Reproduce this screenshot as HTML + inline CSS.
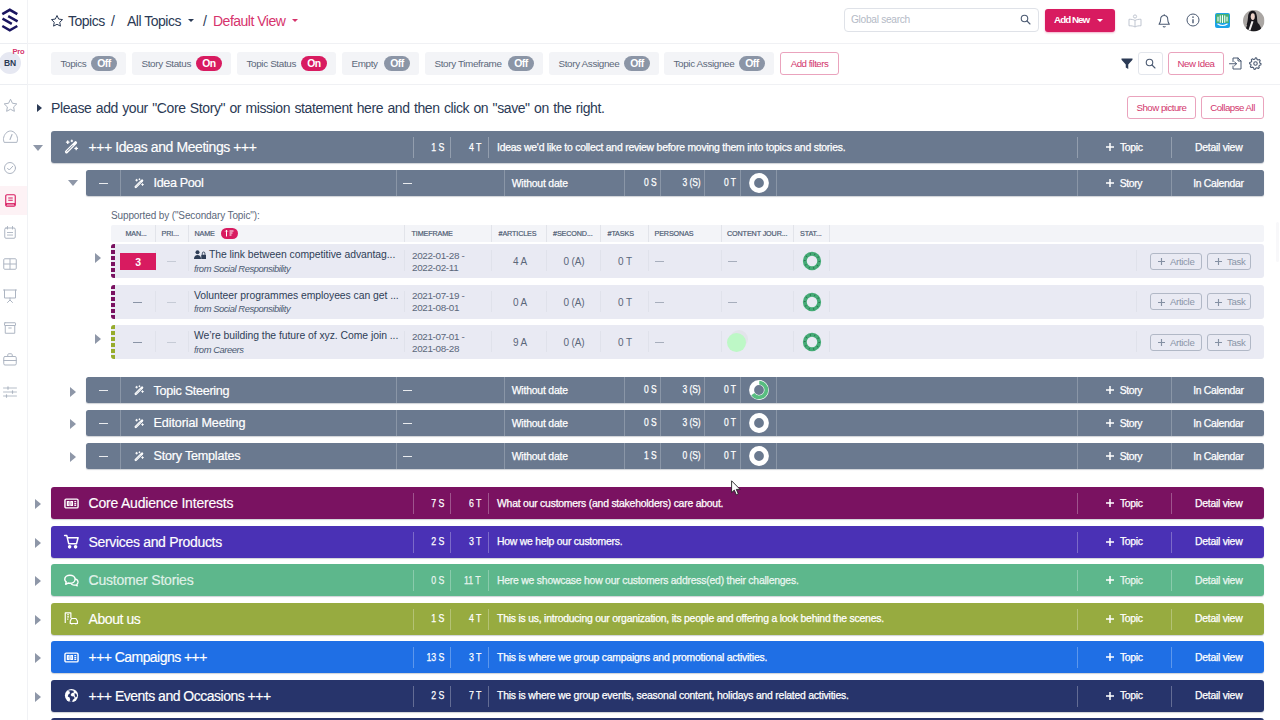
<!DOCTYPE html>
<html>
<head>
<meta charset="utf-8">
<title>Topics</title>
<style>
*{box-sizing:border-box;margin:0;padding:0}
html,body{width:1280px;height:720px;overflow:hidden;background:#fff}
body{font-family:"Liberation Sans",sans-serif;position:relative;color:#2b3a55}
.abs{position:absolute}
.t{position:absolute;white-space:nowrap;line-height:1}
svg{position:absolute;overflow:visible}
/* sidebar */
#side{position:absolute;left:0;top:0;width:28px;height:720px;background:#fff;border-right:1px solid #f1f2f5}
#side .act{position:absolute;left:0;top:186px;width:27px;height:28.500px;background:#fdf2f5}
/* header */
#hdr{position:absolute;left:28px;top:0;width:1252px;height:44px;border-bottom:1px solid #f0f1f4}
#flt{position:absolute;left:28px;top:44px;width:1252px;height:41px;border-bottom:1px solid #f0f1f4}
.chip{position:absolute;top:52px;height:23px;background:#f3f4f7;border-radius:3px}
.chip .l{position:absolute;left:9.500px;top:6px;font-size:9.900px;letter-spacing:-.36px;color:#5b677a;white-space:nowrap;line-height:11px}
.chip .b{position:absolute;right:9px;top:4px;width:26px;height:15px;border-radius:8px;background:#8b95a6;color:#fff;font-size:10.4px;font-weight:700;letter-spacing:-.55px;text-align:center;line-height:15px}
.chip .b.on{background:#d81b60}
.obtn{position:absolute;border:1px solid #eaa3bd;border-radius:3px;color:#d2366d;background:#fff;font-size:9.700px;letter-spacing:-.500px;text-align:center;white-space:nowrap}
/* rows */
.row{position:absolute;border-radius:3px;color:#fff;box-shadow:0 1px 1px rgba(60,70,90,.25)}
.r1{left:51px;width:1213px;height:32px}
.r2{left:85.700px;width:1178.500px;height:26.400px;background:#6a798f;border-radius:2.500px}
.sep{position:absolute;width:1px;background:rgba(255,255,255,.28)}
.r1 .sep{top:6px;height:21px}
.r2 .sep{top:0;height:26px;background:rgba(255,255,255,.22)}
.r1 .ttl{position:absolute;left:37.500px;top:8px;font-size:14px;letter-spacing:-.42px;-webkit-text-stroke:.15px #fff;line-height:16px;white-space:nowrap}
.r1 .n{position:absolute;top:10.500px;font-size:11px;letter-spacing:-.1px;-webkit-text-stroke:.25px #fff;transform:scaleX(.8);transform-origin:right center;line-height:11px;text-align:right;white-space:nowrap}
.r1 .d{position:absolute;left:446px;top:10.700px;font-size:10.400px;letter-spacing:-.215px;-webkit-text-stroke:.25px #fff;line-height:12px;white-space:nowrap}
.r1 .a1{position:absolute;left:1054px;top:10.700px;font-size:10.400px;letter-spacing:-.35px;-webkit-text-stroke:.25px #fff;line-height:12px;white-space:nowrap}
.r1 .a2{position:absolute;left:1144px;top:10.700px;font-size:10.400px;letter-spacing:-.26px;-webkit-text-stroke:.25px #fff;line-height:12px;white-space:nowrap}
.r2 .ttl{position:absolute;left:67.900px;top:6px;font-size:12.600px;letter-spacing:-.38px;-webkit-text-stroke:.2px #fff;line-height:15px;white-space:nowrap}
.r2 .x{position:absolute;top:7.500px;font-size:10.400px;letter-spacing:-.36px;-webkit-text-stroke:.25px #fff;line-height:12px;white-space:nowrap}
.r2 .n{position:absolute;top:6.500px;font-size:10.600px;letter-spacing:-.1px;-webkit-text-stroke:.25px #fff;transform:scaleX(.8);transform-origin:right center;line-height:11px;text-align:right;white-space:nowrap}
.dash{position:absolute;height:1px;background:rgba(255,255,255,.85)}
.car{position:absolute;width:0;height:0;border-style:solid}
.car.r{border-width:5px 0 5px 6px;border-color:transparent transparent transparent #8e97a8}
.car.d{border-width:6px 5px 0 5px;border-color:#8e97a8 transparent transparent transparent}
/* table */
#th{position:absolute;left:111px;top:225px;width:1153px;height:16.600px;background:#f3f4f8;border-radius:2px}
#th span{position:absolute;top:5px;font-size:7.200px;letter-spacing:-.12px;color:#4f5d74;-webkit-text-stroke:.2px #4f5d74;line-height:8px;white-space:nowrap}
#th i{position:absolute;top:0;width:1px;height:16.600px;background:#e2e4ea}
.sr{position:absolute;left:111px;width:1153px;height:34px;background:#e9eaf3;border-radius:3px}
.sr i.s{position:absolute;top:6px;width:1px;height:21px;background:#e0e2eb}
.sr .lb{position:absolute;left:0;top:0;width:4.300px;height:34px;border-radius:3px 0 0 3px}
.sr .tt{position:absolute;left:83px;top:5px;font-size:10.400px;letter-spacing:-.05px;color:#2f3e57;line-height:12px;white-space:nowrap}
.sr .fr{position:absolute;left:83px;top:18.700px;font-size:9.400px;font-style:italic;letter-spacing:-.43px;color:#4b5a72;line-height:11px;white-space:nowrap}
.sr .dt{position:absolute;left:301px;top:5.500px;font-size:9.900px;letter-spacing:-.34px;color:#5b677a;line-height:12px;white-space:nowrap}
.sr .c{position:absolute;top:12px;font-size:10px;letter-spacing:-.1px;color:#5b677a;line-height:12px;text-align:center;white-space:nowrap}
.sr .md{position:absolute;top:17px;height:1px;width:9px;background:#8a94a6}
.sr .ld{position:absolute;top:17px;height:1px;width:9px;background:#a7aebc}
.sr .bt{position:absolute;top:8.500px;height:17px;border:1px solid #b1b8c6;border-radius:3px;color:#8a95a7;font-size:9.600px;letter-spacing:-.32px;line-height:16px;white-space:nowrap}
</style>
</head>
<body>
<div id="side"><div class="act"></div>
<svg style="left:0;top:0" width="28" height="40" viewBox="0 0 28 40" fill="none" stroke="#1a1560" stroke-width="2.500" stroke-linejoin="miter"><path d="M2.300 14.200L9.800 9.800l7.500 4.400M2.500 18.700l9.300 5.200M8.200 16.100l9.400 5.200M2.300 26l7.500 4.400 7.500-4.400"/></svg>
<div class="abs" style="left:0;top:43px;width:27px;height:1px;background:#eceef2"></div>
<div class="abs" style="left:-1px;top:52px;width:22px;height:22px;border-radius:50%;background:#e6e8f2"></div>
<span class="t" style="left:4px;top:59px;font-size:8.500px;font-weight:700;letter-spacing:-.2px;color:#2b3a55">BN</span>
<span class="t" style="left:12.500px;top:48px;font-size:7.500px;font-weight:700;letter-spacing:-.2px;color:#d6336c">Pro</span>
<div class="abs" style="left:0;top:84px;width:27px;height:1px;background:#eceef2"></div>
<svg style="left:2.500px;top:97.500px" width="15" height="15" viewBox="0 0 24 24" fill="none" stroke="#adb5c2" stroke-width="1.600" stroke-linejoin="round"><path d="M12 2l3.100 6.400 7 1-5.100 4.900 1.200 7L12 18l-6.200 3.300 1.200-7L1.900 9.400l7-1z"/></svg>
<svg style="left:2.500px;top:130px" width="15" height="13" viewBox="0 0 30 26" fill="none" stroke="#adb5c2" stroke-width="2" stroke-linejoin="round" stroke-linecap="round"><path d="M2 24c-1-3-1.200-5-1-7C2 9 8 2 15 2s13 7 14 15c.2 2 0 4-1 7z"/><path d="M14 19l4-10" stroke-width="2.200"/></svg>
<svg style="left:4px;top:162px" width="12" height="12" viewBox="0 0 24 24" fill="none" stroke="#adb5c2" stroke-width="2" stroke-linecap="round" stroke-linejoin="round"><circle cx="12" cy="12" r="11"/><path d="M7 12.500l3.500 3.500L17.500 8.500"/></svg>
<svg style="left:4.500px;top:193.700px" width="11" height="13" viewBox="0 0 22 26" fill="none" stroke="#d81b60" stroke-width="2.200" stroke-linejoin="round"><rect x="1.500" y="1.500" width="19" height="23" rx="2.500"/><path d="M6.500 8h9M6.500 12.500h9" stroke-width="2.200"/><path d="M1.500 20.500h19" stroke-width="4.500"/><path d="M4 21.200h14" stroke="#fff" stroke-width="1"/></svg>
<svg style="left:4px;top:226px" width="12" height="13" viewBox="0 0 24 26" fill="none" stroke="#adb5c2" stroke-width="2" stroke-linejoin="round" stroke-linecap="round"><rect x="1.500" y="4" width="21" height="20.500" rx="2.500"/><path d="M7 1v5M17 1v5"/><path d="M7 13h2M11 13h2M15 13h2M7 18h2M11 18h2M15 18h2" stroke-width="2.200"/></svg>
<svg style="left:3px;top:258px" width="14" height="12" viewBox="0 0 28 24" fill="none" stroke="#adb5c2" stroke-width="2" stroke-linejoin="round"><rect x="1.500" y="1.500" width="25" height="21" rx="2"/><path d="M14 1.500v21M1.500 12h25"/></svg>
<svg style="left:3px;top:289px" width="14" height="14" viewBox="0 0 28 28" fill="none" stroke="#adb5c2" stroke-width="2" stroke-linejoin="round" stroke-linecap="round"><path d="M1 2h26M3 2v16h22V2M14 18v4M9 27l5-5 5 5"/></svg>
<svg style="left:4px;top:322px" width="12" height="12" viewBox="0 0 24 24" fill="none" stroke="#adb5c2" stroke-width="2" stroke-linejoin="round" stroke-linecap="round"><rect x="1" y="1.500" width="22" height="5.500" rx="1"/><path d="M2.500 7v15.500h19V7M9.500 12h5"/></svg>
<svg style="left:3px;top:353px" width="14" height="13" viewBox="0 0 28 26" fill="none" stroke="#adb5c2" stroke-width="2" stroke-linejoin="round" stroke-linecap="round"><rect x="1.500" y="7" width="25" height="17" rx="2.500"/><path d="M9.500 7V3.500c0-1 .8-2 2-2h5c1.200 0 2 1 2 2V7M1.500 15h25M11.500 15h5" /></svg>
<svg style="left:3px;top:386px" width="14" height="12" viewBox="0 0 28 24" fill="none" stroke="#adb5c2" stroke-width="1.800" stroke-linecap="round"><path d="M1 4h26M1 12h26M1 20h26"/><path d="M10 1.500v5M19 9.500v5M7 17.500v5" stroke-width="2.400"/></svg>
</div>
<div id="hdr"></div>
<div id="flt"></div>
<!-- header -->
<svg style="left:49.700px;top:13.500px" width="14" height="14" viewBox="0 0 24 24" fill="none" stroke="#2b3a55" stroke-width="1.700" stroke-linejoin="round"><path d="M12 2.6l2.9 6.1 6.6.9-4.8 4.6 1.2 6.6L12 17.6l-5.9 3.2 1.2-6.6L2.5 9.6l6.6-.9z"/></svg>
<span class="t" style="left:68px;top:13.800px;font-size:14px;letter-spacing:-.5px;color:#2b3a55">Topics</span>
<span class="t" style="left:111px;top:13.800px;font-size:14px;color:#2b3a55">/</span>
<span class="t" style="left:127px;top:13.800px;font-size:14px;letter-spacing:-.5px;color:#2b3a55">All Topics</span>
<div class="car" style="left:187.500px;top:19px;border-style:solid;border-width:3.500px 3px 0 3px;border-color:#2b3a55 transparent transparent transparent"></div>
<span class="t" style="left:203px;top:13.800px;font-size:14px;color:#2b3a55">/</span>
<span class="t" style="left:213px;top:13.800px;font-size:14px;letter-spacing:-.5px;color:#d6336c">Default View</span>
<div class="car" style="left:292px;top:19px;border-style:solid;border-width:3.5px 3px 0 3px;border-color:#d6336c transparent transparent transparent"></div>
<div class="abs" style="left:844px;top:8px;width:195px;height:24px;border:1px solid #dfe2e8;border-radius:4px"></div>
<span class="t" style="left:851px;top:15px;font-size:10.2px;letter-spacing:-.3px;color:#b4bac6">Global search</span>
<svg style="left:1020px;top:14px" width="11" height="11" viewBox="0 0 22 22" fill="none" stroke="#4b5a72" stroke-width="2.2" stroke-linecap="round"><circle cx="9" cy="9" r="6.5"/><path d="M14 14l6 6"/></svg>
<div class="abs" style="left:1045px;top:9px;width:70px;height:23px;background:#d81b60;border-radius:3px;box-shadow:0 1px 2px rgba(216,27,96,.35)"></div>
<span class="t" style="left:1054px;top:15px;font-size:9.800px;font-weight:700;letter-spacing:-.950px;color:#fff">Add New</span>
<div class="car" style="left:1097px;top:19px;border-style:solid;border-width:3.5px 3px 0 3px;border-color:#fff transparent transparent transparent"></div>
<!-- reader icon -->
<svg style="left:1128.300px;top:13.600px" width="14" height="14" viewBox="0 0 28 28" fill="none" stroke="#bfc5d0" stroke-width="2" stroke-linejoin="round"><circle cx="14" cy="5" r="3.2"/><path d="M14 13c-3-2-7-2.5-12-2.5v13c5 0 9 .5 12 2.5 3-2 7-2.500 12-2.500v-13c-5 0-9 .5-12 2.500zM14 13v13"/></svg>
<!-- bell -->
<svg style="left:1158px;top:13.600px" width="12.400" height="14.400" viewBox="0 0 24 28" fill="none" stroke="#4b5a72" stroke-width="2" stroke-linejoin="round" stroke-linecap="round"><path d="M12 3c-4.500 0-7 3.500-7 8 0 5-2 7-3 9h20c-1-2-3-4-3-9 0-4.500-2.500-8-7-8zM10 24.500c.6 1 3.400 1 4 0M12 1v2"/></svg>
<!-- info -->
<svg style="left:1186.200px;top:13.400px" width="14" height="14" viewBox="0 0 28 28" fill="none" stroke="#4b5a72" stroke-width="2"><circle cx="14" cy="14" r="12"/><path d="M14 12.500v8" stroke-width="2.800"/><circle cx="14" cy="8.300" r="1.600" fill="#4b5a72" stroke="none"/></svg>
<!-- intercom -->
<div class="abs" style="left:1215px;top:13px;width:15px;height:15px;background:#1ba3e8;border-radius:2px"></div>
<div class="abs" style="left:1216px;top:14px;width:13px;height:8.500px;background:#45b076"></div>
<svg style="left:1215px;top:13px" width="15" height="15" viewBox="0 0 30 30" fill="none" stroke="#fff" stroke-width="2.200" stroke-linecap="round"><path d="M6 8v8M10.500 5.500v13M15 5v14M19.500 5.500v13M24 8v8M5.500 22c6 3.800 13 3.800 19 0"/></svg>
<!-- avatar -->
<svg style="left:1242.500px;top:10.100px" width="21.500" height="21.500" viewBox="0 0 44 44"><defs><clipPath id="av"><circle cx="22" cy="22" r="22"/></clipPath></defs><g clip-path="url(#av)"><rect width="44" height="44" fill="#aaa6a3"/><path d="M20 1.500c-6 0-9 5-9.500 11-.5 6-1 12-3 18h23.500c-2-5-2-11-2.500-17-.5-6-3-12-8.500-12z" fill="#17151a"/><path d="M5 44c1-9 4-17 10.500-20l9-1c7 2 12 9 14 21z" fill="#1b1a1e"/><ellipse cx="20" cy="13.500" rx="4.200" ry="7" fill="#ecd2c8"/><path d="M17.500 22.500l4 1-6.500 19-4-1z" fill="#f3f1f0"/></g></svg>
<!-- filter chips -->
<div class="chip" style="left:51px;width:75px"><span class="l">Topics</span><span class="b">Off</span></div>
<div class="chip" style="left:132px;width:99px"><span class="l">Story Status</span><span class="b on">On</span></div>
<div class="chip" style="left:237px;width:99px"><span class="l">Topic Status</span><span class="b on">On</span></div>
<div class="chip" style="left:342px;width:77px"><span class="l">Empty</span><span class="b">Off</span></div>
<div class="chip" style="left:425px;width:118px"><span class="l">Story Timeframe</span><span class="b">Off</span></div>
<div class="chip" style="left:549px;width:110px"><span class="l">Story Assignee</span><span class="b">Off</span></div>
<div class="chip" style="left:664px;width:110px"><span class="l">Topic Assignee</span><span class="b">Off</span></div>
<div class="obtn" style="left:780px;top:52px;width:59px;height:23px;line-height:21px">Add filters</div>
<svg style="left:1121px;top:58px" width="12" height="12" viewBox="0 0 24 24" fill="#2b3a55"><path d="M1 1h22v2.500l-8.500 9.500v9l-5-3v-6L1 3.500z"/></svg>
<div class="abs" style="left:1138px;top:52px;width:25px;height:23px;border:1px solid #e3e6ec;border-radius:3px"></div>
<svg style="left:1145px;top:58px" width="11" height="11" viewBox="0 0 22 22" fill="none" stroke="#4b5a72" stroke-width="2.200" stroke-linecap="round"><circle cx="9" cy="9" r="6.500"/><path d="M14 14l6 6"/></svg>
<div class="obtn" style="left:1168px;top:52px;width:56px;height:23px;line-height:21px">New Idea</div>
<!-- import icon -->
<svg style="left:1229px;top:57px" width="13" height="13" viewBox="0 0 26 26" fill="none" stroke="#4b5a72" stroke-width="2" stroke-linejoin="round" stroke-linecap="round"><path d="M8 9V2h10l6 6v16H8v-6M18 2v6h6M1 13.500h14M11 9.500l4 4-4 4"/></svg>
<!-- gear -->
<svg style="left:1249px;top:57px" width="13" height="13" viewBox="0 0 24 24" fill="none" stroke="#4b5a72" stroke-width="2" stroke-linejoin="round"><circle cx="12" cy="12" r="3.200"/><path d="M12 1.500l2.200.4.700 2.700 1.700 1 2.700-.8 1.500 1.800-1.300 2.500.5 1.900 2.300 1.400-.4 2.300-2.700.7-1 1.700.8 2.600-1.800 1.500-2.500-1.300-1.900.5-1.400 2.400-2.300-.4-.700-2.700-1.700-1-2.700.8-1.500-1.800 1.300-2.500-.5-1.900L1 12.300l.4-2.300 2.700-.7 1-1.700-.8-2.700L6.100 3.400l2.500 1.300 1.900-.5z"/></svg>
<!-- core story -->
<div class="car" style="left:36.500px;top:103.500px;border-style:solid;border-width:4px 0 4px 5px;border-color:transparent transparent transparent #2b3a55"></div>
<span class="t" style="left:51px;top:100.700px;font-size:14px;letter-spacing:-.4px;word-spacing:.85px;color:#2b3a55">Please add your "Core Story" or mission statement here and then click on "save" on the right.</span>
<div class="obtn" style="left:1127px;top:96px;width:69px;height:23px;line-height:21px">Show picture</div>
<div class="obtn" style="left:1201px;top:96px;width:63px;height:23px;line-height:21px">Collapse All</div>

<div class="row r1" style="top:131px;background:#6a798f"><svg style="left:12.500px;top:7.500px" width="15" height="15" viewBox="0 0 24 24" fill="none" stroke="#fff" stroke-linecap="round"><path d="M4 20.500L18.500 6" stroke-width="5"/><path d="M5 19.500L14 10.500" stroke="#6a798f" stroke-width="1.500"/><path d="M6 3v4M4 5h4M19.500 13v4M17.500 15h4M12.500 2v2M11.500 3h2" stroke-width="2.200"/></svg><span class="ttl">+++ Ideas and Meetings +++</span><i class="sep" style="left:362px"></i><span class="n" style="right:820px">1 S</span><i class="sep" style="left:399px"></i><span class="n" style="right:783px">4 T</span><i class="sep" style="left:437px"></i><span class="d">Ideas we'd like to collect and review before moving them into topics and stories.</span><i class="sep" style="left:1026px"></i><svg style="left:1055px;top:12px" width="8" height="8" viewBox="0 0 8 8" stroke="#fff" stroke-width="1.500"><path d="M4 0v8M0 4h8"/></svg><span class="a1" style="left:1069px">Topic</span><i class="sep" style="left:1120px"></i><span class="a2">Detail view</span></div>
<div class="car d" style="left:33px;top:145px"></div>
<div class="row r2" style="top:170px"><i class="dash" style="left:13px;top:13px;width:9px"></i><i class="sep" style="left:34px"></i><svg style="left:48px;top:7.500px" width="10.500" height="10.500" viewBox="0 0 24 24" fill="none" stroke="#fff" stroke-linecap="round"><path d="M4 20.500L18.500 6" stroke-width="5.500"/><path d="M5 19.500L15 9.500" stroke="#6a798f" stroke-width="1.100" opacity=".7"/><path d="M6 3v4M4 5h4M19.500 13v4M17.500 15h4M12.500 2v2M11.500 3h2" stroke-width="2.200"/></svg><span class="ttl">Idea Pool</span><i class="sep" style="left:310px"></i><i class="dash" style="left:317px;top:13px;width:9px"></i><i class="sep" style="left:418px"></i><span class="x" style="left:426px;letter-spacing:-.18px">Without date</span><i class="sep" style="left:538px"></i><span class="n" style="right:608px">0 S</span><i class="sep" style="left:574px"></i><span class="n" style="right:564px">3 (S)</span><i class="sep" style="left:618px"></i><span class="n" style="right:528px">0 T</span><i class="sep" style="left:654px"></i><svg style="left:663.700px;top:3.200px" width="20" height="20" viewBox="0 0 20 20"><circle cx="10" cy="10" r="7.400" fill="none" stroke="#fff" stroke-width="5"/></svg><i class="sep" style="left:690px"></i><i class="sep" style="left:991px"></i><svg style="left:1020px;top:9px" width="8" height="8" viewBox="0 0 8 8" stroke="#fff" stroke-width="1.500"><path d="M4 0v8M0 4h8"/></svg><span class="x" style="left:1034px">Story</span><i class="sep" style="left:1085px"></i><span class="x" style="left:1107.500px;letter-spacing:-.29px">In Calendar</span></div>
<div class="car d" style="left:68px;top:180px"></div>
<span class="t" style="left:111px;top:210.500px;font-size:10px;letter-spacing:-.12px;color:#5b677a">Supported by ("Secondary Topic"):</span>
<div id="th"><i style="left:43.5px"></i><i style="left:76.5px"></i><i style="left:293px"></i><i style="left:380px"></i><i style="left:435px"></i><i style="left:489px"></i><i style="left:536.5px"></i><i style="left:609.5px"></i><i style="left:681.5px"></i><i style="left:717.5px"></i><span style="left:14.5px">MAN...</span><span style="left:50.5px">PRI...</span><span style="left:83.5px">NAME</span><span style="left:300.5px">TIMEFRAME</span><span style="left:387.5px">#ARTICLES</span><span style="left:442px">#SECOND...</span><span style="left:496.5px">#TASKS</span><span style="left:543.5px">PERSONAS</span><span style="left:616px">CONTENT JOUR...</span><span style="left:689px">STAT...</span><div class="abs" style="left:110px;top:3px;width:17px;height:11px;border-radius:6px;background:#d81b60"></div><svg style="left:114px;top:5px" width="9" height="7" viewBox="0 0 18 14" fill="none" stroke="#fff" stroke-width="2"><path d="M3 0v13M0.500 3L3 0.500 5.500 3M9 2h8M9 6h6M9 10h4"/></svg></div>
<div class="sr" style="top:244px"><div class="lb" style="background:repeating-linear-gradient(180deg,#7a1261 0 4px,transparent 4px 6px)"></div><i class="s" style="left:43.5px"></i><i class="s" style="left:76.5px"></i><i class="s" style="left:293px"></i><i class="s" style="left:380px"></i><i class="s" style="left:435px"></i><i class="s" style="left:489px"></i><i class="s" style="left:536.5px"></i><i class="s" style="left:609.5px"></i><i class="s" style="left:681.5px"></i><i class="s" style="left:717.5px"></i><i class="s" style="left:1024.5px"></i><div class="abs" style="left:9px;top:8.500px;width:36px;height:17px;background:#d81b60"></div><span class="c" style="left:9px;width:36px;top:11.500px;color:#fff;font-weight:700;font-size:10.5px">3</span><i class="ld" style="left:56px;background:#c6cbd6"></i><svg style="left:83px;top:6px" width="12" height="9" viewBox="0 0 24 18" fill="#2f3e57"><circle cx="7" cy="4.500" r="4"/><path d="M0 18c0-5 3-8 7-8s7 3 7 8z"/><path d="M14.500 9.500h9.500v8.500h-9.500z"/><path d="M16.700 9.500V6.500a2.500 2.500 0 015 0v3" fill="none" stroke="#2f3e57" stroke-width="1.800"/></svg><span class="tt" style="left:98px">The link between competitive advantag...</span><span class="fr">from Social Responsibility</span><span class="dt">2022-01-28 -<br>2022-02-11</span><span class="c" style="left:389px;width:40px">4 A</span><span class="c" style="left:443px;width:40px">0 (A)</span><span class="c" style="left:494px;width:40px">0 T</span><i class="ld" style="left:544px"></i><i class="ld" style="left:617px"></i><svg style="left:691px;top:7px" width="20" height="20" viewBox="0 0 20 20"><circle cx="10" cy="10" r="7.200" fill="none" stroke="#45ab76" stroke-width="3.900"/><circle cx="10" cy="10" r="7.200" fill="none" stroke="#1f4e3c" stroke-width="1.600" stroke-dasharray="1 3.500" opacity=".6"/></svg><div class="bt" style="left:1039px;width:52px"><svg style="left:7px;top:4.500px" width="7" height="7" viewBox="0 0 8 8" stroke="#8490a3" stroke-width="1.300"><path d="M4 0v8M0 4h8"/></svg><span style="position:absolute;left:19px">Article</span></div><div class="bt" style="left:1096px;width:44px"><svg style="left:7px;top:4.500px" width="7" height="7" viewBox="0 0 8 8" stroke="#8490a3" stroke-width="1.300"><path d="M4 0v8M0 4h8"/></svg><span style="position:absolute;left:19px">Task</span></div></div>
<div class="car r" style="left:95px;top:252.7px"></div>
<div class="sr" style="top:284.5px"><div class="lb" style="background:repeating-linear-gradient(180deg,#7a1261 0 4px,transparent 4px 6px)"></div><i class="s" style="left:43.5px"></i><i class="s" style="left:76.5px"></i><i class="s" style="left:293px"></i><i class="s" style="left:380px"></i><i class="s" style="left:435px"></i><i class="s" style="left:489px"></i><i class="s" style="left:536.5px"></i><i class="s" style="left:609.5px"></i><i class="s" style="left:681.5px"></i><i class="s" style="left:717.5px"></i><i class="s" style="left:1024.5px"></i><i class="md" style="left:22px"></i><i class="ld" style="left:56px;background:#c6cbd6"></i><span class="tt">Volunteer programmes employees can get ...</span><span class="fr">from Social Responsibility</span><span class="dt">2021-07-19 -<br>2021-08-01</span><span class="c" style="left:389px;width:40px">0 A</span><span class="c" style="left:443px;width:40px">0 (A)</span><span class="c" style="left:494px;width:40px">0 T</span><i class="ld" style="left:544px"></i><i class="ld" style="left:617px"></i><svg style="left:691px;top:7px" width="20" height="20" viewBox="0 0 20 20"><circle cx="10" cy="10" r="7.200" fill="none" stroke="#45ab76" stroke-width="3.900"/><circle cx="10" cy="10" r="7.200" fill="none" stroke="#1f4e3c" stroke-width="1.600" stroke-dasharray="1 3.500" opacity=".6"/></svg><div class="bt" style="left:1039px;width:52px"><svg style="left:7px;top:4.500px" width="7" height="7" viewBox="0 0 8 8" stroke="#8490a3" stroke-width="1.300"><path d="M4 0v8M0 4h8"/></svg><span style="position:absolute;left:19px">Article</span></div><div class="bt" style="left:1096px;width:44px"><svg style="left:7px;top:4.500px" width="7" height="7" viewBox="0 0 8 8" stroke="#8490a3" stroke-width="1.300"><path d="M4 0v8M0 4h8"/></svg><span style="position:absolute;left:19px">Task</span></div></div>
<div class="sr" style="top:325px"><div class="lb" style="background:repeating-linear-gradient(180deg,#97ac2c 0 4px,transparent 4px 6px)"></div><i class="s" style="left:43.5px"></i><i class="s" style="left:76.5px"></i><i class="s" style="left:293px"></i><i class="s" style="left:380px"></i><i class="s" style="left:435px"></i><i class="s" style="left:489px"></i><i class="s" style="left:536.5px"></i><i class="s" style="left:609.5px"></i><i class="s" style="left:681.5px"></i><i class="s" style="left:717.5px"></i><i class="s" style="left:1024.5px"></i><i class="md" style="left:22px"></i><i class="ld" style="left:56px;background:#c6cbd6"></i><span class="tt">We’re building the future of xyz. Come join ...</span><span class="fr">from Careers</span><span class="dt">2021-07-01 -<br>2021-08-28</span><span class="c" style="left:389px;width:40px">9 A</span><span class="c" style="left:443px;width:40px">0 (A)</span><span class="c" style="left:494px;width:40px">0 T</span><i class="ld" style="left:544px"></i><div class="abs" style="left:619px;top:5px;width:18px;height:18px;border-radius:50%;background:#e2e4ea"></div><div class="abs" style="left:616px;top:7.500px;width:19px;height:19px;border-radius:50%;background:#bdf8c6"></div><svg style="left:691px;top:7px" width="20" height="20" viewBox="0 0 20 20"><circle cx="10" cy="10" r="7.200" fill="none" stroke="#45ab76" stroke-width="3.900"/><circle cx="10" cy="10" r="7.200" fill="none" stroke="#1f4e3c" stroke-width="1.600" stroke-dasharray="1 3.500" opacity=".6"/></svg><div class="bt" style="left:1039px;width:52px"><svg style="left:7px;top:4.500px" width="7" height="7" viewBox="0 0 8 8" stroke="#8490a3" stroke-width="1.300"><path d="M4 0v8M0 4h8"/></svg><span style="position:absolute;left:19px">Article</span></div><div class="bt" style="left:1096px;width:44px"><svg style="left:7px;top:4.500px" width="7" height="7" viewBox="0 0 8 8" stroke="#8490a3" stroke-width="1.300"><path d="M4 0v8M0 4h8"/></svg><span style="position:absolute;left:19px">Task</span></div></div>
<div class="car r" style="left:95px;top:333.7px"></div>
<div class="row r2" style="top:377px"><i class="dash" style="left:13px;top:13px;width:9px"></i><i class="sep" style="left:34px"></i><svg style="left:48px;top:7.500px" width="10.500" height="10.500" viewBox="0 0 24 24" fill="none" stroke="#fff" stroke-linecap="round"><path d="M4 20.500L18.500 6" stroke-width="5.500"/><path d="M5 19.500L15 9.500" stroke="#6a798f" stroke-width="1.100" opacity=".7"/><path d="M6 3v4M4 5h4M19.500 13v4M17.500 15h4M12.500 2v2M11.500 3h2" stroke-width="2.200"/></svg><span class="ttl" style="letter-spacing:-.3px;top:6.500px">Topic Steering</span><i class="sep" style="left:310px"></i><i class="dash" style="left:317px;top:13px;width:9px"></i><i class="sep" style="left:418px"></i><span class="x" style="left:426px;letter-spacing:-.18px">Without date</span><i class="sep" style="left:538px"></i><span class="n" style="right:608px">0 S</span><i class="sep" style="left:574px"></i><span class="n" style="right:564px">3 (S)</span><i class="sep" style="left:618px"></i><span class="n" style="right:528px">0 T</span><i class="sep" style="left:654px"></i><svg style="left:663.700px;top:3.200px" width="20" height="20" viewBox="0 0 20 20"><circle cx="10" cy="10" r="7.400" fill="none" stroke="#fff" stroke-width="5"/><circle cx="10" cy="10" r="7.400" fill="none" stroke="#58bd80" stroke-width="3.800" stroke-dasharray="30 16.500" transform="rotate(-88 10 10)"/></svg><i class="sep" style="left:690px"></i><i class="sep" style="left:991px"></i><svg style="left:1020px;top:9px" width="8" height="8" viewBox="0 0 8 8" stroke="#fff" stroke-width="1.500"><path d="M4 0v8M0 4h8"/></svg><span class="x" style="left:1034px">Story</span><i class="sep" style="left:1085px"></i><span class="x" style="left:1107.500px;letter-spacing:-.29px">In Calendar</span></div>
<div class="car r" style="left:70px;top:386.5px"></div>
<div class="row r2" style="top:410px"><i class="dash" style="left:13px;top:13px;width:9px"></i><i class="sep" style="left:34px"></i><svg style="left:48px;top:7.500px" width="10.500" height="10.500" viewBox="0 0 24 24" fill="none" stroke="#fff" stroke-linecap="round"><path d="M4 20.500L18.500 6" stroke-width="5.500"/><path d="M5 19.500L15 9.500" stroke="#6a798f" stroke-width="1.100" opacity=".7"/><path d="M6 3v4M4 5h4M19.500 13v4M17.500 15h4M12.500 2v2M11.500 3h2" stroke-width="2.200"/></svg><span class="ttl" style="letter-spacing:-.12px">Editorial Meeting</span><i class="sep" style="left:310px"></i><i class="dash" style="left:317px;top:13px;width:9px"></i><i class="sep" style="left:418px"></i><span class="x" style="left:426px;letter-spacing:-.18px">Without date</span><i class="sep" style="left:538px"></i><span class="n" style="right:608px">0 S</span><i class="sep" style="left:574px"></i><span class="n" style="right:564px">3 (S)</span><i class="sep" style="left:618px"></i><span class="n" style="right:528px">0 T</span><i class="sep" style="left:654px"></i><svg style="left:663.700px;top:3.200px" width="20" height="20" viewBox="0 0 20 20"><circle cx="10" cy="10" r="7.400" fill="none" stroke="#fff" stroke-width="5"/></svg><i class="sep" style="left:690px"></i><i class="sep" style="left:991px"></i><svg style="left:1020px;top:9px" width="8" height="8" viewBox="0 0 8 8" stroke="#fff" stroke-width="1.500"><path d="M4 0v8M0 4h8"/></svg><span class="x" style="left:1034px">Story</span><i class="sep" style="left:1085px"></i><span class="x" style="left:1107.500px;letter-spacing:-.29px">In Calendar</span></div>
<div class="car r" style="left:70px;top:419px"></div>
<div class="row r2" style="top:443px"><i class="dash" style="left:13px;top:13px;width:9px"></i><i class="sep" style="left:34px"></i><svg style="left:48px;top:7.500px" width="10.500" height="10.500" viewBox="0 0 24 24" fill="none" stroke="#fff" stroke-linecap="round"><path d="M4 20.500L18.500 6" stroke-width="5.500"/><path d="M5 19.500L15 9.500" stroke="#6a798f" stroke-width="1.100" opacity=".7"/><path d="M6 3v4M4 5h4M19.500 13v4M17.500 15h4M12.500 2v2M11.500 3h2" stroke-width="2.200"/></svg><span class="ttl" style="letter-spacing:-.22px">Story Templates</span><i class="sep" style="left:310px"></i><i class="dash" style="left:317px;top:13px;width:9px"></i><i class="sep" style="left:418px"></i><span class="x" style="left:426px;letter-spacing:-.18px">Without date</span><i class="sep" style="left:538px"></i><span class="n" style="right:608px">1 S</span><i class="sep" style="left:574px"></i><span class="n" style="right:564px">0 (S)</span><i class="sep" style="left:618px"></i><span class="n" style="right:528px">0 T</span><i class="sep" style="left:654px"></i><svg style="left:663.700px;top:3.200px" width="20" height="20" viewBox="0 0 20 20"><circle cx="10" cy="10" r="7.400" fill="none" stroke="#fff" stroke-width="5"/></svg><i class="sep" style="left:690px"></i><i class="sep" style="left:991px"></i><svg style="left:1020px;top:9px" width="8" height="8" viewBox="0 0 8 8" stroke="#fff" stroke-width="1.500"><path d="M4 0v8M0 4h8"/></svg><span class="x" style="left:1034px">Story</span><i class="sep" style="left:1085px"></i><span class="x" style="left:1107.500px;letter-spacing:-.29px">In Calendar</span></div>
<div class="car r" style="left:70px;top:452px"></div>
<div class="row r1" style="top:487px;background:#7a1261"><svg style="left:12.500px;top:8.500px" width="15" height="15" viewBox="0 0 24 24" fill="none" stroke="#fff" stroke-width="2.300"><rect x="1.500" y="5" width="21" height="14" rx="2"/><path d="M5.500 9h2.500v6H5.500zM11 9h2.500v6H11zM16.500 9h3M16.500 12h3M16.500 15h3" stroke-width="2"/></svg><span class="ttl" style="letter-spacing:-.2px">Core Audience Interests</span><i class="sep" style="left:362px"></i><span class="n" style="right:820px">7 S</span><i class="sep" style="left:399px"></i><span class="n" style="right:783px">6 T</span><i class="sep" style="left:437px"></i><span class="d">What our customers (and stakeholders) care about.</span><i class="sep" style="left:1026px"></i><svg style="left:1055px;top:12px" width="8" height="8" viewBox="0 0 8 8" stroke="#fff" stroke-width="1.500"><path d="M4 0v8M0 4h8"/></svg><span class="a1" style="left:1069px">Topic</span><i class="sep" style="left:1120px"></i><span class="a2">Detail view</span></div>
<div class="car r" style="left:35px;top:499px"></div>
<div class="row r1" style="top:525.5px;background:#4a31b5"><svg style="left:12.500px;top:8.500px" width="15" height="15" viewBox="0 0 24 24" fill="none" stroke="#fff" stroke-width="2.400" stroke-linejoin="round" stroke-linecap="round"><path d="M1 2.500h3.500l3 13h12.500l2.500-9.500H6"/><circle cx="9" cy="20.500" r="1.700" fill="#fff"/><circle cx="18.500" cy="20.500" r="1.700" fill="#fff"/></svg><span class="ttl" style="letter-spacing:-.32px">Services and Products</span><i class="sep" style="left:362px"></i><span class="n" style="right:820px">2 S</span><i class="sep" style="left:399px"></i><span class="n" style="right:783px">3 T</span><i class="sep" style="left:437px"></i><span class="d">How we help our customers.</span><i class="sep" style="left:1026px"></i><svg style="left:1055px;top:12px" width="8" height="8" viewBox="0 0 8 8" stroke="#fff" stroke-width="1.500"><path d="M4 0v8M0 4h8"/></svg><span class="a1" style="left:1069px">Topic</span><i class="sep" style="left:1120px"></i><span class="a2">Detail view</span></div>
<div class="car r" style="left:35px;top:537.5px"></div>
<div class="row r1" style="top:564px;background:#5db78c;color:rgba(255,255,255,.78)"><svg style="left:12.500px;top:8.500px" width="15" height="15" viewBox="0 0 24 24" fill="none" stroke="#fff" stroke-width="2" stroke-linejoin="round"><path d="M9.500 3.500C5 3.500 1.200 6.400 1.200 10c0 1.700.9 3.200 2.300 4.300L2.700 18l3.800-1.900c1 .3 2 .4 3 .4 4.500 0 8.300-2.900 8.300-6.500S14 3.500 9.500 3.500z" stroke-width="2.300"/><path d="M17.500 9.500c2.800.6 5 2.600 5 5 0 1.400-.7 2.600-1.800 3.500l.5 2.500-2.800-1.300c-2.500.6-5.500 0-7-1.700"/></svg><span class="ttl" style="letter-spacing:-.2px">Customer Stories</span><i class="sep" style="left:362px"></i><span class="n" style="right:820px">0 S</span><i class="sep" style="left:399px"></i><span class="n" style="right:783px">11 T</span><i class="sep" style="left:437px"></i><span class="d">Here we showcase how our customers address(ed) their challenges.</span><i class="sep" style="left:1026px"></i><svg style="left:1055px;top:12px" width="8" height="8" viewBox="0 0 8 8" stroke="#fff" stroke-width="1.500"><path d="M4 0v8M0 4h8"/></svg><span class="a1" style="left:1069px">Topic</span><i class="sep" style="left:1120px"></i><span class="a2">Detail view</span></div>
<div class="car r" style="left:35px;top:576px"></div>
<div class="row r1" style="top:602.5px;background:#97ab40"><svg style="left:12.500px;top:8.500px" width="15" height="15" viewBox="0 0 24 24" fill="none" stroke="#fff" stroke-width="1.900" stroke-linejoin="round"><path d="M2 19V3h9v8M5 6h3M5 9.500h3M5 13h2"/><path d="M10 20v-4l2-4h7l2.500 4v4zM12.500 20v1.500M19 20v1.500" /></svg><span class="ttl">About us</span><i class="sep" style="left:362px"></i><span class="n" style="right:820px">1 S</span><i class="sep" style="left:399px"></i><span class="n" style="right:783px">4 T</span><i class="sep" style="left:437px"></i><span class="d">This is us, introducing our organization, its people and offering a look behind the scenes.</span><i class="sep" style="left:1026px"></i><svg style="left:1055px;top:12px" width="8" height="8" viewBox="0 0 8 8" stroke="#fff" stroke-width="1.500"><path d="M4 0v8M0 4h8"/></svg><span class="a1" style="left:1069px">Topic</span><i class="sep" style="left:1120px"></i><span class="a2">Detail view</span></div>
<div class="car r" style="left:35px;top:614.5px"></div>
<div class="row r1" style="top:641px;background:#1f6fe5"><svg style="left:12.500px;top:8.500px" width="15" height="15" viewBox="0 0 24 24" fill="none" stroke="#fff" stroke-width="2.300"><rect x="1.500" y="5" width="21" height="14" rx="2"/><path d="M5.500 9h2.500v6H5.500zM11 9h2.500v6H11zM16.500 9h3M16.500 12h3M16.500 15h3" stroke-width="2"/></svg><span class="ttl" style="letter-spacing:-.55px">+++ Campaigns +++</span><i class="sep" style="left:362px"></i><span class="n" style="right:820px">13 S</span><i class="sep" style="left:399px"></i><span class="n" style="right:783px">3 T</span><i class="sep" style="left:437px"></i><span class="d">This is where we group campaigns and promotional activities.</span><i class="sep" style="left:1026px"></i><svg style="left:1055px;top:12px" width="8" height="8" viewBox="0 0 8 8" stroke="#fff" stroke-width="1.500"><path d="M4 0v8M0 4h8"/></svg><span class="a1" style="left:1069px">Topic</span><i class="sep" style="left:1120px"></i><span class="a2">Detail view</span></div>
<div class="car r" style="left:35px;top:653px"></div>
<div class="row r1" style="top:679.5px;background:#27346b"><svg style="left:12.500px;top:8.500px" width="15" height="15" viewBox="0 0 24 24"><circle cx="12" cy="12" r="10.500" fill="#fff"/><path d="M6 4.500l3 1 .5 3-2.500 2-1 3 3 1.500 1 4-2 2.500 5 1 1-3.500 3-2.500-1-3-3.500-.5-2-2 2-3 3.500-1-1-2.500-4-1z" fill="#27346b"/><path d="M17 8l3 1.500 1 3.500-2.500 2-1.500-3.500z" fill="#27346b"/></svg><span class="ttl" style="letter-spacing:-.5px">+++ Events and Occasions +++</span><i class="sep" style="left:362px"></i><span class="n" style="right:820px">2 S</span><i class="sep" style="left:399px"></i><span class="n" style="right:783px">7 T</span><i class="sep" style="left:437px"></i><span class="d">This is where we group events, seasonal content, holidays and related activities.</span><i class="sep" style="left:1026px"></i><svg style="left:1055px;top:12px" width="8" height="8" viewBox="0 0 8 8" stroke="#fff" stroke-width="1.500"><path d="M4 0v8M0 4h8"/></svg><span class="a1" style="left:1069px">Topic</span><i class="sep" style="left:1120px"></i><span class="a2">Detail view</span></div>
<div class="car r" style="left:35px;top:691.5px"></div>
<div class="row r1" style="top:718px;background:#27346b"></div>
<div class="abs" style="left:1276px;top:222px;width:3px;height:40px;background:#f8f8fa;border-radius:2px"></div>
<svg style="left:730.500px;top:479.500px;z-index:50" width="11" height="16" viewBox="0 0 11 16"><path d="M.6.800v11.800l2.700-2.500 2 4.700 2-.9-2-4.500h3.800z" fill="#fff" stroke="#222" stroke-width=".9" stroke-linejoin="round"/></svg>
</body>
</html>
